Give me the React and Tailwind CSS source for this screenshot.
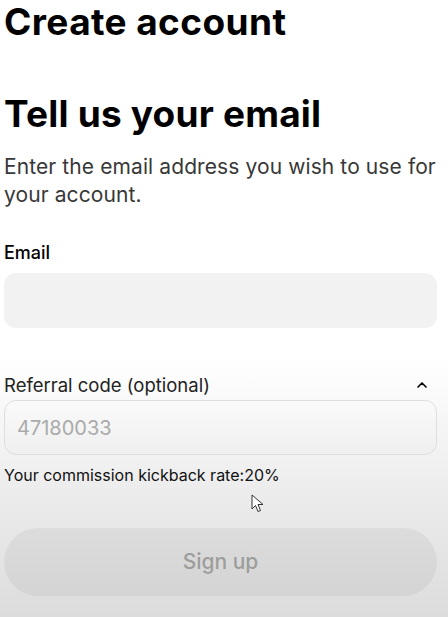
import React from "react";
import { ChevronUp } from "lucide-react";

const font = { fontFamily: "Inter, 'Noto Sans', sans-serif" };

const Cursor = () => (
  <svg
    className="absolute left-[251px] top-[494px]"
    width="14"
    height="20"
    viewBox="0 0 14 20"
  >
    <path
      d="M1 1 L1 15 L4.5 11.5 L7 17.5 L9.5 16.5 L7 10.5 L12 10.5 Z"
      fill="#fff"
      stroke="#333"
      strokeWidth="1"
      strokeLinejoin="round"
    />
  </svg>
);

export default function App() {
  return (
    <div
      className="relative min-h-[617px] w-full overflow-hidden bg-[linear-gradient(to_bottom,#ffffff_0%,#ffffff_58%,#ececec_80%,#dcdcdc_100%)] pl-[4px] pr-[11px] text-black"
      style={font}
    >
      <h1 className="text-[37px] font-bold leading-[44px] tracking-[0.4px]">
        Create account
      </h1>

      <h2 className="mt-[50px] text-[37px] font-bold leading-[40px] tracking-[0.2px]">
        Tell us your email
      </h2>

      <p className="mt-[19px] text-[21px] leading-[28px] tracking-[0.1px] text-[#383838]">
        Enter the email address you wish to use for your account.
      </p>

      <label className="mt-[32px] block text-[18px] font-medium leading-[24px]">
        Email
      </label>
      <div className="mt-[8px] h-[55px] w-full rounded-[12px] bg-[#f2f2f2]" />

      <div className="mt-[45px] flex items-center justify-between">
        <span className="text-[18.5px] leading-[24px] text-[#222]">
          Referral code (optional)
        </span>
        <ChevronUp size={16} strokeWidth={2.5} className="mr-[7px]" />
      </div>
      <div className="mt-[3px] flex h-[55px] w-full items-center rounded-[12px] border border-[#dedede] bg-[linear-gradient(to_bottom,#fafafa,#efefef)] px-[12px]">
        <span className="text-[20px] text-[#aaa]">47180033</span>
      </div>

      <p className="mt-[9px] text-[16px] leading-[22px] text-[#111]">
        Your commission kickback rate:20%
      </p>

      <button className="mt-[42px] flex h-[68px] w-full items-center justify-center rounded-full bg-[linear-gradient(to_bottom,#dcdcdc,#d4d4d4)] text-[21px] font-medium text-[#9d9d9d]">
        Sign up
      </button>

      <Cursor />
    </div>
  );
}
